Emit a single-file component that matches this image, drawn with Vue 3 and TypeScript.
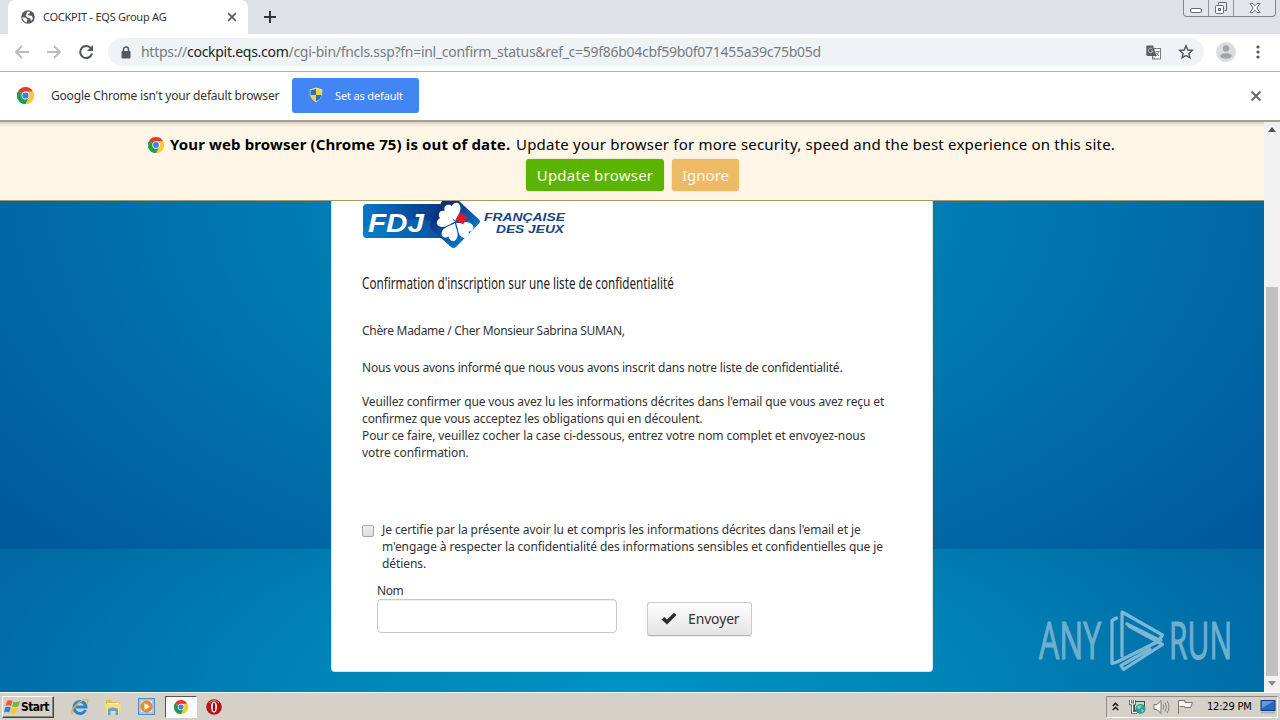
<script setup lang="ts">
import { defineComponent, h } from 'vue'

const pageUrl = {
  scheme: 'https://',
  host: 'cockpit.eqs.com',
  path: '/cgi-bin/fncls.ssp?fn=inl_confirm_status&ref_c=59f86b04cbf59b0f071455a39c75b05d',
}

const ChromeLogo = defineComponent({
  props: { size: { type: Number, default: 16 } },
  setup(props) {
    return () =>
      h('svg', { width: props.size, height: props.size, viewBox: '0 0 48 48' }, [
        h('path', { d: 'M24 24 3.2 12A24 24 0 0 1 44.8 12Z', fill: '#e33b2e' }),
        h('path', { d: 'M24 24 44.8 12A24 24 0 0 1 24 48Z', fill: '#fcc934' }),
        h('path', { d: 'M24 24V48A24 24 0 0 1 3.2 12Z', fill: '#1e9e50' }),
        h('path', { d: 'M24 13H45.3A24 24 0 0 1 24 48L33.5 29.5Z', fill: '#fcc934' }),
        h('path', { d: 'M33.5 29.5 24 48A24 24 0 0 1 3.2 12L14.5 29.5Z', fill: '#1e9e50' }),
        h('circle', { cx: 24, cy: 24, r: 11, fill: '#fff' }),
        h('circle', { cx: 24, cy: 24, r: 8.8, fill: '#3f7ee8' }),
      ])
  },
})
</script>

<template>
  <div class="screen">
    <header class="tabstrip">
      <div class="tab">
        <svg class="globe" width="14" height="14" viewBox="0 0 14 14">
          <circle cx="7" cy="7" r="6.8" fill="#55585c" />
          <path d="M1.5 7.2 5 7.8 6.5 9.6 5.8 12.6 3.5 11.5 1.5 9ZM6.3 1.8 9.3 1.6 8.6 3.2 6.8 4.2 8 5.6 10.8 5.8 12 8.8 10 11 9.3 8.6 6.4 7.5 4.6 5.8Z" fill="#fff" />
        </svg>
        <span class="tab-title">COCKPIT - EQS Group AG</span>
        <svg class="tab-close" width="10" height="10" viewBox="0 0 10 10"><path d="M1.2 1.2 8.8 8.8M8.8 1.2 1.2 8.8" stroke="#55595e" stroke-width="1.7" /></svg>
      </div>
      <svg class="new-tab" width="12" height="12" viewBox="0 0 12 12"><path d="M6 0V12M0 6H12" stroke="#333639" stroke-width="2" /></svg>
      <div class="window-controls">
        <span><svg width="14" height="16" viewBox="0 0 14 16"><rect x="1.5" y="8.500" width="11" height="4" rx="1.500" fill="#fff" stroke="#656c79" /></svg></span>
        <span><svg width="14" height="16" viewBox="0 0 14 16"><path d="M4.500 4.500V2.500H12.500V10.500H10.500" fill="none" stroke="#656c79" /><rect x="1.500" y="5.500" width="8" height="8" rx="1" fill="#fff" stroke="#656c79" /><rect x="4.500" y="8.500" width="2" height="2" fill="none" stroke="#656c79" /></svg></span>
        <span class="wide"><svg width="14" height="16" viewBox="0 0 14 16"><path d="M2 3.500H5L7 5.800 9 3.500H12L8.800 8 12 12.500H9L7 10.200 5 12.500H2L5.200 8Z" fill="#fff" stroke="#656c79" /></svg></span>
      </div>
    </header>

    <nav class="toolbar">
      <svg width="16" height="16" viewBox="0 0 16 16"><path d="M15 8H2M8 2 2 8 8 14" fill="none" stroke="#b9bbbe" stroke-width="1.800" /></svg>
      <svg class="forward" width="16" height="16" viewBox="0 0 16 16"><path d="M1 8H14M8 2 14 8 8 14" fill="none" stroke="#b9bbbe" stroke-width="1.800" /></svg>
      <svg class="reload" width="16" height="16" viewBox="0 0 16 16"><path d="M13 4.500A6 6 0 1 0 14 9.500" fill="none" stroke="#505357" stroke-width="2" /><path d="M15 1V7H9Z" fill="#505357" /></svg>
      <div class="omnibox">
        <svg class="lock" width="10" height="13" viewBox="0 0 10 13"><path d="M2.500 6V3.500A2.500 2.500 0 0 1 7.500 3.500V6" fill="none" stroke="#55585c" stroke-width="1.500" /><rect x=".5" y="5" width="9" height="7.500" rx="1" fill="#55585c" /></svg>
        <p class="url">{{ pageUrl.scheme }}<b>{{ pageUrl.host }}</b>{{ pageUrl.path }}</p>
        <svg class="translate" width="15" height="15" viewBox="0 0 15 15"><rect x="6.500" y="3.500" width="8" height="10.500" fill="#fff" stroke="#777a7e" /><path d="M1 .5H7L10.500 11H1.500Q.3 11 .3 9.500V1.500Q.3.500 1 .5Z" fill="#5b5e62" /><path d="M6.500 4A2.300 2.300 0 1 0 7 6H5" fill="none" stroke="#ccc" stroke-width=".9" /><path d="M9.500 6.500H13.500M12.700 6.500Q12 9.500 9.700 11.500M10.500 8 13 11M7 11.500 9 14" fill="none" stroke="#777a7e" stroke-width=".9" /></svg>
        <svg class="star" width="16" height="16" viewBox="0 0 16 16"><path d="M8 1.800 9.800 6 14.300 6.400 10.900 9.400 11.900 13.900 8 11.500 4.100 13.900 5.100 9.400 1.700 6.400 6.200 6Z" fill="none" stroke="#505357" stroke-width="1.400" /></svg>
      </div>
      <svg class="avatar" width="20" height="20" viewBox="0 0 20 20"><circle cx="10" cy="10" r="10" fill="#dcdddf" /><circle cx="10" cy="6.400" r="3.200" fill="#a2a4a7" /><ellipse cx="10" cy="14" rx="5.800" ry="2.800" fill="#a2a4a7" /></svg>
      <svg class="dots" width="4" height="14" viewBox="0 0 4 14"><circle v-for="y in [2, 7, 12]" :key="y" cx="2" :cy="y" r="1.600" fill="#505357" /></svg>
    </nav>

    <section class="infobar">
      <ChromeLogo :size="17" />
      <span class="info-text">Google Chrome isn't your default browser</span>
      <button class="set-default">
        <svg width="14" height="16" viewBox="0 0 14 16"><path d="M7 .5 13.300 2.500Q14 11.500 7 15.500Q0 11.500 .7 2.500Z" fill="#e9e6c5" /><path d="M7 1.700V8H1.500Q1.200 5 1.700 3.300ZM7 8H12.500Q11.500 12.500 7 14.500Z" fill="#2c6fc4" /><path d="M7 1.700 12.300 3.300Q12.800 5 12.500 8H7ZM1.500 8H7V14.500Q2.500 12.500 1.500 8Z" fill="#fad22e" /></svg>
        <span>Set as default</span>
      </button>
      <svg class="info-close" width="12" height="12" viewBox="0 0 12 12"><path d="M1.500 1.500 10.500 10.500M10.500 1.500 1.500 10.500" stroke="#66696d" stroke-width="2" /></svg>
    </section>

    <div class="viewport">
      <main class="page">
        <div class="outdated">
          <p class="outdated-line">
            <ChromeLogo :size="16" />
            <strong>Your web browser (Chrome 75) is out of date.</strong>
            <span>Update your browser for more security, speed and the best experience on this site.</span>
          </p>
          <div class="outdated-actions">
            <button class="update"><span>Update browser</span></button>
            <button class="ignore"><span>Ignore</span></button>
          </div>
        </div>

        <div class="backdrop">
          <div class="card">
            <svg class="logo" width="206" height="48" viewBox="0 0 206 48">
              <defs>
                <linearGradient id="plate" x1="0" y1="0" x2="1" y2="0"><stop offset="0" stop-color="#0878c8" /><stop offset=".6" stop-color="#064b9d" /><stop offset="1" stop-color="#0a3484" /></linearGradient>
                <linearGradient id="gem" x1="0" y1="0" x2="1" y2="1"><stop offset=".25" stop-color="#09327f" /><stop offset=".8" stop-color="#087bcc" /></linearGradient>
                <path id="petal" d="M0 0C-3-5-9-8-7.500-14C-6.500-17.500-2-17.500 0-14.500C2-17.500 6.500-17.500 7.500-14C9-8 3-5 0 0Z" />
              </defs>
              <path d="M5 3H78L84 37H5Q1 37 1 33V7Q1 3 5 3Z" fill="url(#plate)" />
              <path d="M1 26Q35 13 80 22V37H5Q1 37 1 33Z" fill="#078ed5" opacity=".35" />
              <path d="M80 0H97L117 18.500Q119 20.500 117 22.500L94 46Q91.500 48 89 46L70 29Q66 25 69 20Z" fill="url(#gem)" />
              <text class="fdj" x="6" y="31" textLength="56" lengthAdjust="spacingAndGlyphs">FDJ</text>
              <g fill="#fff">
                <use href="#petal" transform="translate(93.500 20) rotate(-14) scale(1.050)" />
                <use href="#petal" transform="translate(93 21) rotate(-76) scale(1.050)" />
                <use href="#petal" transform="translate(93 22) rotate(-155) scale(1.050)" />
                <use href="#petal" transform="translate(94 22) rotate(125) scale(1.050)" />
              </g>
              <path d="M98 11.500 105.500 16 101 23.500 93.500 19Z" fill="#e11927" />
              <text class="brand" x="122" y="19.500" textLength="81" lengthAdjust="spacingAndGlyphs">FRANÇAISE</text>
              <text class="brand" x="134" y="31.800" textLength="68" lengthAdjust="spacingAndGlyphs">DES JEUX</text>
            </svg>

            <h1><span>Confirmation d'inscription sur une liste de confidentialité</span></h1>
            <p class="hello">Chère Madame / Cher Monsieur Sabrina SUMAN,</p>
            <p class="informed">Nous vous avons informé que nous vous avons inscrit dans notre liste de confidentialité.</p>
            <p class="instructions">
              <span class="request">Veuillez confirmer que vous avez lu les informations décrites dans l'email que vous avez reçu et</span><br>
              <span class="request">confirmez que vous acceptez les obligations qui en découlent.</span><br>
              <span class="steps">Pour ce faire, veuillez cocher la case ci-dessous, entrez votre nom complet et envoyez-nous</span><br>
              <span class="steps">votre confirmation.</span>
            </p>

            <div class="certify">
              <i class="checkbox" />
              <p>
                <span>Je certifie par la présente avoir lu et compris les informations décrites dans l'email et je</span><br>
                <span>m'engage à respecter la confidentialité des informations sensibles et confidentielles que je</span><br>
                <span>détiens.</span>
              </p>
            </div>

            <div class="form-row">
              <label><span>Nom</span><i class="field" /></label>
              <button class="send">
                <svg width="16" height="13" viewBox="0 0 16 13"><path d="M.5 7.500 3.500 5 6 7.500 13 .8 15.500 3 6 12.500Z" fill="#2f2f2f" /></svg>
                <span>Envoyer</span>
              </button>
            </div>
          </div>
        </div>
      </main>

      <aside class="scrollbar">
        <svg width="8" height="5" viewBox="0 0 8 5"><path d="M0 5 4 0 8 5Z" fill="#505050" /></svg>
        <i class="thumb" />
        <svg width="8" height="5" viewBox="0 0 8 5"><path d="M0 0 4 5 8 0Z" fill="#8a8a8a" /></svg>
      </aside>

      <svg class="watermark" width="202" height="76" viewBox="-2 -6 202 76">
        <text x="1" y="50" textLength="62" lengthAdjust="spacingAndGlyphs">ANY</text>
        <text x="131" y="50" textLength="63" lengthAdjust="spacingAndGlyphs">RUN</text>
        <g fill="none" stroke-width="3.200" stroke-linejoin="round" stroke-linecap="round">
          <path d="M78.500 9 74 11.500V54.500L79 53 123 31" />
          <path d="M84 47V3L124.500 26 121 31 89 15" />
          <path d="M91 17 124.500 35.500 85.500 60.500 83 56.500 112 40" />
        </g>
      </svg>
    </div>

    <footer class="taskbar">
      <button class="start">
        <svg width="17" height="16" viewBox="0 0 17 16"><path d="M3 2Q6 .5 8.500 2L7 7Q4.500 5.500 1.500 7Z" fill="#ef5a28" /><path d="M9.500 2.500Q12 4 16 2L14.500 7Q11.500 8.800 8 7.500Z" fill="#73ba35" /><path d="M1.200 8.500Q4 7 6.700 8.500L5.200 13.500Q3 12 0 13.500Z" fill="#2b83d9" /><path d="M7.700 9Q10.500 10.500 14 8.500L12.500 13.500Q9.500 15.500 6.200 14Z" fill="#f9c820" /></svg>
        <span>Start</span>
      </button>
      <div class="launchers">
        <svg class="ie" width="18" height="18" viewBox="0 0 18 18"><path d="M14.500 12A6 6 0 1 1 15 9H5" fill="none" stroke="#2484d8" stroke-width="3" /><path d="M2 16Q-1 14 5 7Q13 0 16.500 2Q17.500 3 15.500 6" fill="none" stroke="#e4b62b" stroke-width="1.400" /></svg>
        <svg class="folder" width="18" height="18" viewBox="0 0 18 18"><path d="M2 2H7L8.500 4H15.500V15H2Z" fill="#e6b84d" /><path d="M3 5H15V13H3Z" fill="#fff4bd" /><path d="M1 6H16.500V15H1Z" fill="#f8dc7d" /><path d="M4 17V11Q9 8 14 11V17H11.500V13H6.500V17Z" fill="#58a8d6" /></svg>
        <svg class="player" width="17" height="17" viewBox="0 0 17 17"><rect x=".5" y=".5" width="16" height="16" fill="#a4c9ea" stroke="#568bc0" /><rect x="3" y="3" width="11" height="11" fill="#e2edf6" /><circle cx="8.500" cy="8.500" r="6" fill="#f18b18" /><path d="M6.500 5 12 8.500 6.500 12Z" fill="#fff" /></svg>
        <div class="active-app"><ChromeLogo :size="14" /></div>
        <svg class="opera" width="16" height="16" viewBox="0 0 16 16"><circle cx="8" cy="8" r="7.800" fill="#b5141c" /><path d="M3 4Q8-1 13 4" fill="none" stroke="#e28282" /><ellipse cx="8" cy="8" rx="3" ry="5.500" fill="#fff" /><ellipse cx="8" cy="8" rx="1.300" ry="4.500" fill="#971016" /></svg>
      </div>
      <div class="tray">
        <svg width="7" height="9" viewBox="0 0 7 9"><path d="M.8 4 3.500 1.300 6.200 4M.8 8 3.500 5.300 6.200 8" fill="none" stroke="#111" stroke-width="1.500" /></svg>
        <svg class="network" width="17" height="16" viewBox="0 0 17 16"><rect x="5.500" y="2.500" width="10" height="9" fill="#b9ddc9" stroke="#45494b" /><path d="M1.500 1V5H5.500V1M3.500 5V13.500H8" fill="none" stroke="#555" stroke-width="2.600" /><path d="M1.500 1V5H5.500V1M3.500 5V13.500H8" fill="none" stroke="#fff" /><circle cx="11.500" cy="10" r="5" fill="#329c8f" /><path d="M8 8Q11 5 13 7Q12 10 9 10M12 10 15 11 13 14" fill="#8cd1c3" /></svg>
        <svg class="sound" width="17" height="16" viewBox="0 0 17 16"><path d="M1 5.500H4L8 1.500V14.500L4 10.500H1Z" fill="#f8f8f6" stroke="#77766f" /><path d="M10 5.500Q11.500 8 10 10.500M12 3.500Q14.800 8 12 12.500M14 1.800Q18 8 14 14.200" fill="none" stroke="#87857e" /></svg>
        <svg class="flag" width="17" height="16" viewBox="0 0 17 16"><path d="M1.500 15V1.500H8V3.500H15.500L13.500 8.500H7.500V7.500H2.500" fill="#f5f5f3" stroke="#77766f" /></svg>
        <time>12:29 PM</time>
        <svg class="desktop" width="16" height="14" viewBox="0 0 16 14"><rect x="1" y=".5" width="14" height="10" fill="#2769bd" stroke="#143c80" /><path d="M2 1H14L2 8Z" fill="#5d9ddd" /><path d="M1 12.500H15" stroke="#9bb3ca" stroke-width="2" /></svg>
      </div>
    </footer>
  </div>
</template>

<style>
html, body { margin: 0; overflow: hidden; }
</style>

<style scoped>
.screen { width: 1280px; height: 720px; display: flex; flex-direction: column; overflow: hidden; font-family: "Noto Sans", "Open Sans", sans-serif; font-size: 12px; color: #333; background: #fff; }
.screen * { box-sizing: border-box; }
svg { display: block; flex: none; }
p, h1 { margin: 0; }
button { border: 0; padding: 0; font: inherit; display: flex; align-items: center; }
span { white-space: nowrap; }

.tabstrip { height: 34px; flex: none; display: flex; background: #dee1e8; padding-left: 8px; }
.tab { width: 240px; height: 34px; background: #fff; border-radius: 7px 7px 0 0; display: flex; align-items: center; padding: 0 11px 0 13px; }
.tab-title { margin-left: 8px; padding-bottom: 2px; font-size: 11px; letter-spacing: -.24px; }
.tab-close { margin-left: auto; }
.new-tab { margin: 11px 0 0 16px; }
.window-controls { display: flex; width: 93px; height: 17px; margin: 0 4px 0 auto; border: 1px solid #7f8592; border-top: 0; border-radius: 0 0 4px 4px; background: #e2e5eb; }
.window-controls span { width: 25px; display: flex; justify-content: center; border-right: 1px solid #8f95a2; }
.window-controls .wide { flex: 1; width: auto; border: 0; }

.toolbar { height: 38px; flex: none; display: flex; align-items: center; border-bottom: 1px solid #b1b1b1; padding: 0 0 1px 14px; }
.forward { margin-left: 16px; }
.reload { margin-left: 16px; }
.omnibox { width: 1096px; height: 28px; margin-left: 14px; border-radius: 14px; background: #f0f3f6; display: flex; align-items: center; padding: 0 10px 0 13px; }
.url { margin-left: 10px; padding-bottom: 1px; font-size: 14px; line-height: 20px; letter-spacing: -.28px; color: #777b80; white-space: nowrap; }
.url b { font-weight: 400; color: #202327; }
.translate { margin-left: auto; }
.star { margin-left: 17px; }
.avatar { margin-left: 12px; }
.dots { margin-left: 20px; }

.infobar { height: 50px; flex: none; display: flex; align-items: center; padding: 0 18px 2px 17px; border-bottom: 2px solid #a49e94; }
.info-text { width: 228px; margin-left: 17px; letter-spacing: -.19px; }
.set-default { width: 127px; height: 35px; margin-left: 13px; background: #4285f4; border-radius: 3px; color: #fff; font-size: 11px; padding-left: 17px; gap: 12px; letter-spacing: -.15px; }
.info-close { margin: 2px 0 0 auto; }

.viewport { height: 570px; flex: none; display: flex; position: relative; }
.page { width: 1264px; height: 570px; display: flex; flex-direction: column; overflow: hidden; }
.outdated { height: 79px; flex: none; background: linear-gradient(#d8d1c5, #fff6e8 5px); border-bottom: 1px solid #a99867; color: #000; }
.outdated-line { height: 37px; padding: 9px 0 1px 148px; display: flex; align-items: center; font-size: 15px; line-height: 24px; }
.outdated-line strong, .outdated-line span { padding-bottom: 1px; }
.outdated-line strong { width: 341px; margin-left: 6px; font-weight: 700; letter-spacing: .12px; white-space: nowrap; }
.outdated-line span { margin-left: 5px; letter-spacing: .21px; }
.outdated-actions { display: flex; gap: 8px; padding-left: 526px; }
.outdated-actions button { height: 32px; border-radius: 3px; color: #fffbe8; font-size: 15px; justify-content: center; box-shadow: 0 0 2px rgba(0, 0, 0, .2); }
.update { width: 138px; background: #5ab400; letter-spacing: .25px; }
.ignore { width: 67px; background: #edba66; }

.backdrop { flex: 1; display: flex; justify-content: center; background: radial-gradient(ellipse 720px 300px at 50% 100%, #0093c3 0, #0084b7 45%, #0067a2 100%) 0 348px / 100% 143px no-repeat, radial-gradient(ellipse 900px 560px at 50% 0, #0090c0 0, #0077ad 45%, #00539a 100%); }
.card { width: 602px; height: 471px; padding: 0 30px; background: #fff; border-radius: 0 0 4px 4px; border: 1px solid #d8e3ea; border-top: 0; font-size: 12px; line-height: 17px; color: #333; }
.logo { overflow: visible; }
.fdj { font: italic 700 26px "Liberation Sans", sans-serif; fill: #fff; }
.brand { font: italic 700 10.800px "Liberation Sans", sans-serif; fill: #174681; }
h1 { height: 22px; margin-top: 23px; font-size: 17px; line-height: 22px; font-weight: 400; width: 312px; color: #222; }
h1 span { display: inline-block; transform: scaleX(.687); transform-origin: 0 50%; }
.hello { margin-top: 28px; letter-spacing: -.3px; }
.informed { margin-top: 20px; letter-spacing: -.19px; }
.instructions { margin-top: 17px; }
.request { letter-spacing: -.125px; }
.steps { letter-spacing: -.075px; }
.certify { display: flex; margin-top: 60px; letter-spacing: -.09px; }
.checkbox { width: 12px; height: 12px; margin: 4px 8px 0 0; border: 1px solid #a6a6a6; border-radius: 2px; background: linear-gradient(#efefef, #dcdcdc); }
.form-row { display: flex; margin: 10px 0 0 15px; }
label { width: 240px; }
label span { display: block; letter-spacing: -.4px; }
.field { display: block; height: 34px; border: 1px solid #c8c8c8; border-radius: 4px; box-shadow: inset 0 1px 1px rgba(0, 0, 0, .07); }
.send { width: 105px; height: 34px; margin: 20px 0 0 30px; padding: 0 0 1px 13px; border: 1px solid #cacaca; border-bottom-color: #b3b3b3; border-radius: 3px; background: linear-gradient(#fff, #e4e4e4); color: #333; font-size: 14px; gap: 11px; letter-spacing: -.15px; box-shadow: 0 1px 1px rgba(0, 0, 0, .08); }

.scrollbar { width: 16px; height: 570px; background: #f1f1f1; display: flex; flex-direction: column; align-items: center; padding: 5px 0 4px; }
.thumb { width: 12px; height: 389px; margin: 155px 0 5px; background: #c1c1c1; }
.watermark { position: absolute; left: 1036px; top: 481px; overflow: visible; }
.watermark text { font: 400 51px "Open Sans", sans-serif; fill: #6fafce; stroke: #6fafce; stroke-width: 1.200px; }
.watermark g { stroke: #7cb7d3; }

.taskbar { height: 28px; flex: none; display: flex; align-items: center; background: #d5d1c9; border-top: 1px solid #f9f8f5; color: #000; }
.start { width: 52px; height: 22px; margin-left: 2px; padding-left: 1px; background: #d5d1c9; border: 1px solid #fff; border-right-color: #444; border-bottom-color: #444; box-shadow: inset -1px -1px #8c8982; }
.start span { font: 700 12px "DejaVu Sans Condensed", "DejaVu Sans", sans-serif; letter-spacing: -.55px; }
.launchers { display: flex; align-items: center; margin-left: 17px; }
.folder { margin-left: 15px; }
.player { margin-left: 16px; }
.active-app { width: 32px; height: 22px; margin: 0 9px 0 10px; display: flex; align-items: center; justify-content: center; border: 1px solid #555; border-right-color: #fff; border-bottom-color: #fff; background: #fafaf8; }
.tray { width: 172px; height: 22px; margin: 0 2px 0 auto; display: flex; align-items: center; padding-left: 5px; border: 1px solid #8f8c85; border-right-color: #fff; border-bottom-color: #fff; }
.network { margin-left: 10px; }
.sound { margin-left: 7px; }
.flag { margin-left: 7px; }
time { margin-left: 13px; width: 46px; font: 11px "DejaVu Sans Condensed", "DejaVu Sans", sans-serif; white-space: nowrap; letter-spacing: -.2px; }
.desktop { margin-left: 7px; }
</style>
